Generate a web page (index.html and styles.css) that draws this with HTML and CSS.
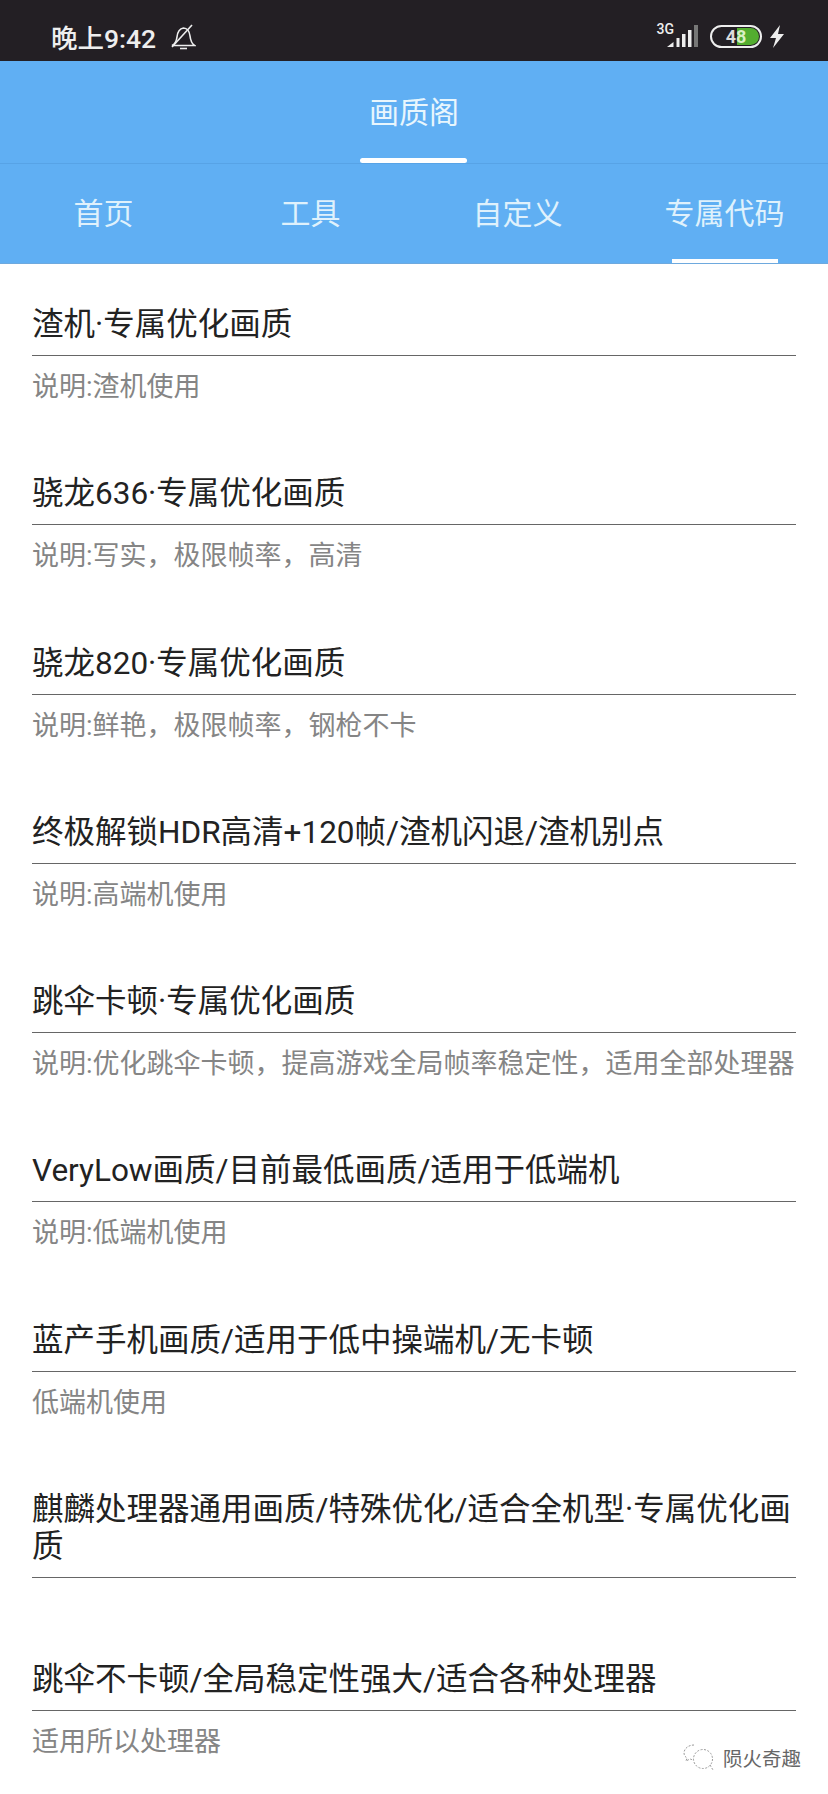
FILE: index.html
```html
<!DOCTYPE html>
<html lang="zh-CN">
<head>
    <meta charset="UTF-8">
    <meta name="viewport" content="width=device-width, initial-scale=1.0">
    <title>画质阁</title>
    <link rel="stylesheet" href="styles.css">
</head>
<body>
    <div class="status-bar">
        <div class="status-left">
            <span class="clock">晚上9:42</span>
            <svg class="bell" width="26" height="26" viewBox="0 0 26 26" fill="none" stroke="#eeeeee" stroke-width="1.6">
                <path d="M2 21.5 C5 20 6.5 17 7 13 C7.5 8 10 4.5 13.5 4 C17 4 19.5 7.500 20 12 C20.500 16 21.500 19.500 24.500 21.500 Z"/>
                <path d="M10 24.500 H17"/>
                <path d="M2 23 L22 1"/>
            </svg>
        </div>
        <div class="status-right">
            <div class="signal">
                <span class="net">3G</span>
                <svg width="32" height="23" viewBox="0 0 32 23" fill="#eeeeee">
                    <path d="M0 22 L6.500 17 V22 Z"/>
                    <rect x="9.500" y="13" width="3" height="9"/>
                    <rect x="15" y="9" width="3.500" height="13"/>
                    <rect x="21" y="5" width="3.500" height="17"/>
                    <rect x="27" y="0" width="4" height="22" fill="#777777"/>
                </svg>
            </div>
            <div class="battery">
                <div class="battery-fill"></div>
                <span class="battery-num">4<span class="battery-lit">8</span></span>
            </div>
            <svg class="bolt" width="16" height="23" viewBox="0 0 16 23" fill="#eeeeee">
                <path d="M11 0 L1 13 H7 L4 23 L15 9 H9 Z"/>
            </svg>
        </div>
    </div>

    <div class="header">
        <span class="header-title">画质阁</span>
        <span class="header-line"></span>
    </div>

    <div class="tabs">
        <div class="tab">首页</div>
        <div class="tab">工具</div>
        <div class="tab">自定义</div>
        <div class="tab active">专属代码</div>
    </div>

    <div class="list">
        <div class="item">
            <div class="item-title">渣机·专属优化画质</div>
            <div class="item-desc">说明:渣机使用</div>
        </div>
        <div class="item">
            <div class="item-title">骁龙636·专属优化画质</div>
            <div class="item-desc">说明:写实，极限帧率，高清</div>
        </div>
        <div class="item">
            <div class="item-title">骁龙820·专属优化画质</div>
            <div class="item-desc">说明:鲜艳，极限帧率，钢枪不卡</div>
        </div>
        <div class="item">
            <div class="item-title">终极解锁HDR高清+120帧/渣机闪退/渣机别点</div>
            <div class="item-desc">说明:高端机使用</div>
        </div>
        <div class="item">
            <div class="item-title">跳伞卡顿·专属优化画质</div>
            <div class="item-desc">说明:优化跳伞卡顿，提高游戏全局帧率稳定性，适用全部处理器</div>
        </div>
        <div class="item">
            <div class="item-title">VeryLow画质/目前最低画质/适用于低端机</div>
            <div class="item-desc">说明:低端机使用</div>
        </div>
        <div class="item">
            <div class="item-title">蓝产手机画质/适用于低中操端机/无卡顿</div>
            <div class="item-desc">低端机使用</div>
        </div>
        <div class="item">
            <div class="item-title">麒麟处理器通用画质/特殊优化/适合全机型·专属优化画质</div>
            <div class="item-desc"></div>
        </div>
        <div class="item">
            <div class="item-title">跳伞不卡顿/全局稳定性强大/适合各种处理器</div>
            <div class="item-desc">适用所以处理器</div>
        </div>
    </div>

    <div class="watermark">
        <svg width="32" height="27" viewBox="0 0 32 27" fill="none" stroke="#999999" stroke-width="1" stroke-dasharray="2 1.500">
            <path d="M11 1 C5 1 1 5 1 9 C1 11 2 13 4 14 L3 17 L7 15 C8 15 9 16 10 16"/>
            <circle cx="20" cy="15" r="9.500"/>
            <path d="M27 21 L30 26"/>
        </svg>
        <span>陨火奇趣</span>
    </div>
</body>
</html>
```

FILE: styles.css
```css
* {
    box-sizing: border-box;
}
body {
    margin: 0;
    width: 828px;
    height: 1794px;
    overflow: hidden;
    position: relative;
    background: white;
    font-family: Roboto, "Noto Sans CJK SC", sans-serif;
}
.status-bar {
    height: 61px;
    padding: 12px 43px 0 51px;
    background-color: #231f24;
    color: #eeeeee;
    display: flex;
    align-items: center;
    justify-content: space-between;
}
.status-left {
    display: flex;
    align-items: center;
    gap: 14px;
}
.clock {
    font-size: 26.500px;
    font-weight: 500;
}
.status-right {
    display: flex;
    align-items: center;
}
.signal {
    display: flex;
    align-items: flex-end;
    margin-right: 11px;
}
.net {
    font-size: 14px;
    font-weight: 500;
    line-height: 16px;
    align-self: flex-start;
    margin: -4px -7px 0 0;
}
.battery {
    position: relative;
    width: 52px;
    height: 23px;
    border: 2px solid #eeeeee;
    border-radius: 12px;
    margin-right: 7px;
    overflow: hidden;
    display: flex;
    align-items: center;
    justify-content: center;
}
.battery-fill {
    position: absolute;
    left: 25px;
    top: 1px;
    bottom: 1px;
    right: 1px;
    background-color: #53ad2f;
    border-radius: 0 10px 10px 0;
}
.battery-num {
    position: relative;
    font-size: 18px;
    font-weight: 700;
    color: #dcdcdc;
}
.battery-lit {
    color: #d8f0c4;
}
.header {
    height: 103px;
    padding-top: 7px;
    background-color: #60aff3;
    border-bottom: 1px solid #57a3e6;
    color: #e8f6fd;
    display: flex;
    flex-direction: column;
    align-items: center;
    position: relative;
}
.header-title {
    font-size: 30px;
    line-height: 90px;
}
.header-line {
    position: absolute;
    left: 360px;
    bottom: 0;
    width: 107px;
    height: 5px;
    background-color: white;
    border-radius: 3px;
}
.tabs {
    height: 100px;
    background-color: #60aff3;
    border-bottom: 1px solid #6ea9de;
    display: flex;
    padding-bottom: 5px;
}
.tab {
    flex: 1;
    position: relative;
    color: #dff1fc;
    font-size: 30px;
    display: flex;
    align-items: center;
    justify-content: center;
}
.tab.active::after {
    content: "";
    position: absolute;
    left: 50%;
    margin-left: -53px;
    bottom: -5px;
    width: 106px;
    height: 4px;
    background-color: white;
}
.list {
    padding: 0 32px;
}
.item {
    padding-top: 42px;
}
.item-title {
    padding-bottom: 12px;
    border-bottom: 1px solid #666666;
    color: #222222;
    font-size: 31.500px;
    line-height: 37px;
}
.item-desc {
    padding: 13px 0 28.300px;
    color: #858585;
    font-size: 27px;
    line-height: 36px;
    white-space: nowrap;
}
.watermark {
    position: absolute;
    right: 27px;
    bottom: 22px;
    display: flex;
    align-items: center;
    gap: 8px;
    color: #666666;
    font-size: 19.500px;
}
```
